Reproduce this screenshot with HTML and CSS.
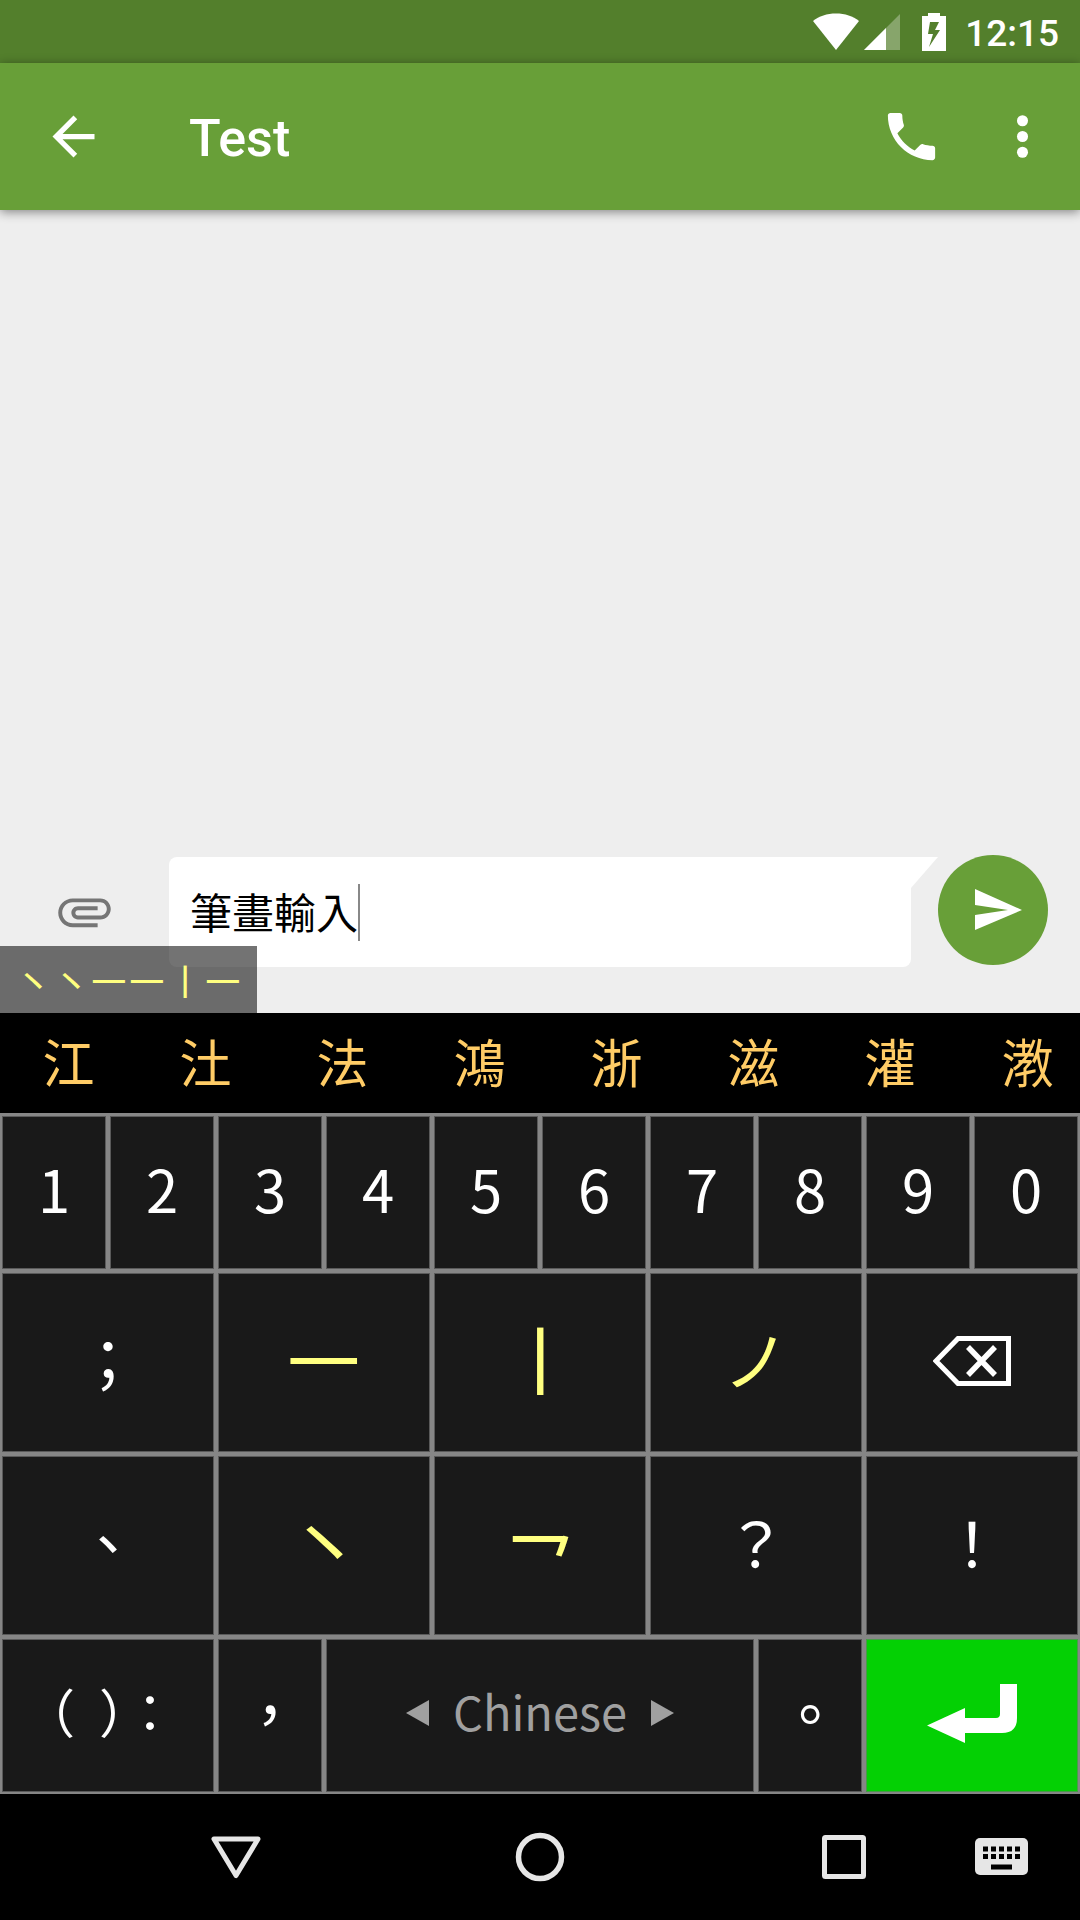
FILE: index.html
```html
<!DOCTYPE html>
<html lang="zh-Hant">
<head>
<meta charset="utf-8">
<meta name="viewport" content="width=device-width, initial-scale=1">
<title>Test</title>
<link rel="stylesheet" href="styles.css">
</head>
<body>
<div class="screen">
  <div class="status-bar">
    <svg class="status-wifi" width="46" height="38" viewBox="0 0 46 38" aria-hidden="true"><path d="M23 37 0 8C6 3 14 .5 23 .5S40 3 46 8Z" fill="#fff"/></svg>
    <svg class="status-signal" width="36" height="38" viewBox="0 0 36 38" aria-hidden="true"><path d="M0 37 36 1V37Z" fill="#fff" fill-opacity=".3"/><path d="M0 37 22 15V37Z" fill="#fff"/></svg>
    <svg class="status-battery" width="24" height="38" viewBox="0 0 24 38" aria-hidden="true"><path fill-rule="evenodd" d="M6 0H18V3H24V38H0V3H6ZM8 9 6 21H11L7 34 18 17H13L17 9Z" fill="#fff"/></svg>
    <time class="clock">12:15</time>
  </div>

  <header class="app-bar">
    <button class="icon-button" aria-label="Back"><svg width="63" height="63" viewBox="0 0 24 24"><path fill="#fff" d="M20 11H7.83l5.59-5.59L12 4l-8 8 8 8 1.41-1.41L7.83 13H20z"/></svg></button>
    <h1 class="title">Test</h1>
    <button class="icon-button" aria-label="Call"><svg width="63" height="63" viewBox="0 0 24 24"><path fill="#fff" d="M6.62 10.79c1.44 2.83 3.76 5.14 6.59 6.59l2.2-2.2c.27-.27.67-.36 1.02-.24 1.12.37 2.33.57 3.57.57.55 0 1 .45 1 1V20c0 .55-.45 1-1 1-9.39 0-17-7.61-17-17 0-.55.45-1 1-1h3.500c.55 0 1 .45 1 1 0 1.250.2 2.450.57 3.570.11.35.03.74-.25 1.020z"/></svg></button>
    <button class="icon-button" aria-label="More options"><svg width="63" height="63" viewBox="0 0 24 24"><g fill="#fff"><circle cx="12" cy="6" r="2.1"/><circle cx="12" cy="12" r="2.1"/><circle cx="12" cy="18" r="2.1"/></g></svg></button>
  </header>

  <main class="conversation">
    <div class="compose">
      <button class="icon-button" aria-label="Attach"><svg width="63" height="63" viewBox="0 0 24 24"><path fill="#757575" d="M2 12.500C2 9.460 4.460 7 7.500 7H18c2.210 0 4 1.790 4 4s-1.790 4-4 4H9.500C8.120 15 7 13.880 7 12.500S8.120 10 9.500 10H17v1.500H9.500c-1.300 0-1.300 2 0 2H18c1.380 0 2.500-1.120 2.500-2.500S19.380 8.500 18 8.500H7.500C5.290 8.500 3.500 10.290 3.500 12.500S5.290 16.500 7.500 16.500H17V18H7.500C4.460 18 2 15.540 2 12.500z"/></svg></button>
      <label class="bubble">
        <input class="message" type="text" value="筆畫輸入" aria-label="Message"><span class="caret"></span>
        <svg class="bubble-tail" width="28" height="40" viewBox="0 0 28 40" aria-hidden="true"><path d="M0 0H28L1 31V40H0Z" fill="#fff"/></svg>
      </label>
      <button class="send" aria-label="Send"><svg width="47" height="42" viewBox="0 0 47 42"><path d="M0 0 47 21 0 41V26L33 21 0 16Z" fill="#fff"/></svg></button>
    </div>
    <div class="composing">㇔㇔㇐㇐㇑㇐</div>
  </main>

  <div class="candidates">
    <button class="candidate">江</button>
    <button class="candidate">汢</button>
    <button class="candidate">法</button>
    <button class="candidate">鴻</button>
    <button class="candidate">浙</button>
    <button class="candidate">滋</button>
    <button class="candidate">灌</button>
    <button class="candidate">漖</button>
  </div>

  <div class="keyboard">
    <div class="key-row short">
      <button class="key">1</button>
      <button class="key">2</button>
      <button class="key">3</button>
      <button class="key">4</button>
      <button class="key">5</button>
      <button class="key">6</button>
      <button class="key">7</button>
      <button class="key">8</button>
      <button class="key">9</button>
      <button class="key">0</button>
    </div>
    <div class="key-row">
      <button class="key wide mark">；</button>
      <button class="key wide stroke">㇐</button>
      <button class="key wide stroke">㇑</button>
      <button class="key wide stroke slash">ノ</button>
      <button class="key wide icon" aria-label="Backspace"><svg width="78" height="50" viewBox="0 0 78 50"><path d="M25 2.500H75.500V47.500H25L3 25Z" fill="none" stroke="#fff" stroke-width="5"/><path d="M35 11 62 39M62 11 35 39" stroke="#fff" stroke-width="5.500"/></svg></button>
    </div>
    <div class="key-row">
      <button class="key wide mark">、</button>
      <button class="key wide stroke">㇔</button>
      <button class="key wide stroke hook">㇖</button>
      <button class="key wide mark">？</button>
      <button class="key wide mark">！</button>
    </div>
    <div class="key-row short">
      <button class="key wide symbols"><span>（</span><span>）</span><span>：</span></button>
      <button class="key mark">，</button>
      <button class="key space"><svg width="23" height="26" viewBox="0 0 23 26" aria-hidden="true"><path d="M23 0V26L0 13Z" fill="#a0a0a0"/></svg>Chinese<svg width="23" height="26" viewBox="0 0 23 26" aria-hidden="true"><path d="M0 0V26L23 13Z" fill="#a0a0a0"/></svg></button>
      <button class="key mark">。</button>
      <button class="key wide icon enter" aria-label="Enter"><svg width="90" height="60" viewBox="0 0 90 60"><path d="M73 0H90V34Q90 49 75 49H38V59L0 41.500 38 24V34H69Q73 34 73 30Z" fill="#fff"/></svg></button>
    </div>
  </div>

  <nav class="nav-bar">
    <button class="nav-button" aria-label="Hide keyboard"><svg width="50" height="50" viewBox="0 0 50 50"><path d="M3 7H47L25 43.500Z" fill="none" stroke="#e6e6e6" stroke-width="5" stroke-linejoin="round"/></svg></button>
    <button class="nav-button" aria-label="Home"><svg width="50" height="50" viewBox="0 0 50 50"><circle cx="25" cy="25" r="21.500" fill="none" stroke="#e6e6e6" stroke-width="5.500"/></svg></button>
    <button class="nav-button" aria-label="Recent apps"><svg width="50" height="50" viewBox="0 0 50 50"><rect x="5.500" y="5.500" width="39" height="39" rx="1" fill="none" stroke="#e6e6e6" stroke-width="5"/></svg></button>
    <button class="nav-button switcher" aria-label="Switch keyboard"><svg width="53" height="38" viewBox="0 0 53 38"><rect width="53" height="37" rx="5" fill="#e6e6e6"/><path d="M8 11H45M8 18.500H45" stroke="#000" stroke-width="5" stroke-dasharray="5 3"/><path d="M16 29H37" stroke="#000" stroke-width="5"/></svg></button>
  </nav>
</div>
</body>
</html>
```
FILE: styles.css
```css
* {
  box-sizing: border-box;
}

body {
  margin: 0;
  background: #000;
  font-family: "Noto Sans CJK TC", sans-serif;
}

button {
  margin: 0;
  padding: 0;
  border: 0;
  background: none;
  color: inherit;
  font: inherit;
}

svg {
  display: block;
}

.screen {
  display: flex;
  flex-direction: column;
  min-height: 100vh;
}

.status-bar {
  display: flex;
  align-items: center;
  justify-content: flex-end;
  height: 63px;
  padding-right: 21px;
  background: #537f2c;
  color: #fff;
}

.status-signal {
  margin-left: 5px;
}

.status-battery {
  margin: 0 19px 0 22px;
}

.clock {
  padding-top: 4px;
  font: 500 37px/44px Roboto, sans-serif;
}

.app-bar {
  position: relative;
  z-index: 1;
  display: flex;
  align-items: center;
  height: 147px;
  padding: 0 26px 0 42px;
  background: #689f38;
  box-shadow: 0 2px 10px rgba(0, 0, 0, 0.45);
  color: #fff;
}

.title {
  flex: 1;
  margin: 0;
  padding: 4px 0 0 84px;
  font: 500 52px/62px Roboto, sans-serif;
}

.app-bar .icon-button:last-child {
  margin-left: 48px;
}

.conversation {
  position: relative;
  display: flex;
  flex: 1;
  flex-direction: column;
  justify-content: flex-end;
  padding: 32px 32px 46px 53px;
  background: #eee;
}

.compose {
  display: flex;
  align-items: center;
}

.bubble {
  position: relative;
  display: flex;
  flex: 1;
  align-items: center;
  height: 110px;
  margin: 2px 27px 0 53px;
  padding-left: 21px;
  border-radius: 8px 0 8px 8px;
  background: #fff;
}

.bubble-tail {
  position: absolute;
  top: 0;
  left: 100%;
  margin-left: -1px;
}

.message {
  width: 168px;
  height: 62px;
  padding: 0 0 4px;
  border: 0;
  outline: 0;
  background: none;
  color: #000;
  font: 42px/58px "Noto Sans CJK TC", sans-serif;
}

.caret {
  width: 2px;
  height: 57px;
  background: #888;
}

.send {
  display: flex;
  align-items: center;
  align-self: flex-start;
  width: 110px;
  height: 110px;
  padding-left: 37px;
  border-radius: 50%;
  background: #689f38;
}

.composing {
  position: absolute;
  bottom: 0;
  left: 0;
  height: 67px;
  padding: 0 15px 0 14px;
  background: rgba(0, 0, 0, 0.55);
  color: #ffff80;
  font-size: 38px;
  line-height: 67px;
}

.candidates {
  display: flex;
  height: 100px;
  overflow: hidden;
  background: #000;
}

.candidate {
  flex: none;
  width: 137px;
  padding-bottom: 4px;
  color: #ffcc66;
  font-size: 52px;
  line-height: 96px;
}

.keyboard {
  padding-top: 1px;
  background: #868686;
}

.key-row {
  display: grid;
  grid-template-columns: repeat(10, 1fr);
  height: 183px;
}

.key-row.short {
  height: 157px;
}

.key {
  display: flex;
  align-items: center;
  justify-content: center;
  padding-bottom: 10px;
  border: 2px solid #868686;
  background: #191919;
  box-shadow: inset 0 0 0 1px #5a5a5a;
  color: #fff;
  font-size: 58px;
  line-height: 80px;
}

.key.wide {
  grid-column: span 2;
}

.key.mark {
  padding-bottom: 8px;
  font-size: 61px;
}

.key.stroke {
  color: #ffff80;
  font-size: 79px;
}

.key.slash {
  padding-bottom: 12px;
  font-size: 66px;
}

/* The hook glyph sits high in its em box */
.key.hook {
  padding: 12px 0 0;
}

.key.icon {
  padding-bottom: 4px;
}

.key.space {
  grid-column: span 4;
  gap: 24px;
  color: #a0a0a0;
  font-size: 47px;
}

.space svg {
  margin-top: 4px;
}

.symbols span {
  display: flex;
  justify-content: center;
  width: 42px;
  font-size: 52px;
  font-feature-settings: "halt";
}

/* Half-width parentheses keep their ink on the inner side */
.symbols span:nth-child(1) {
  padding-right: 8px;
}

.symbols span:nth-child(2) {
  padding-left: 8px;
}

.key.enter {
  background: #04d004;
  box-shadow: inset 0 0 0 1px #4a9a4a;
}

.nav-bar {
  display: flex;
  height: 126px;
  padding: 0 29px 0 calc(50% - 384px);
  background: #000;
}

.nav-button {
  display: flex;
  align-items: center;
  justify-content: center;
  width: 160px;
}

.nav-button + .nav-button {
  margin-left: 144px;
}

.nav-button.switcher {
  width: 100px;
  margin-left: auto;
}
```
